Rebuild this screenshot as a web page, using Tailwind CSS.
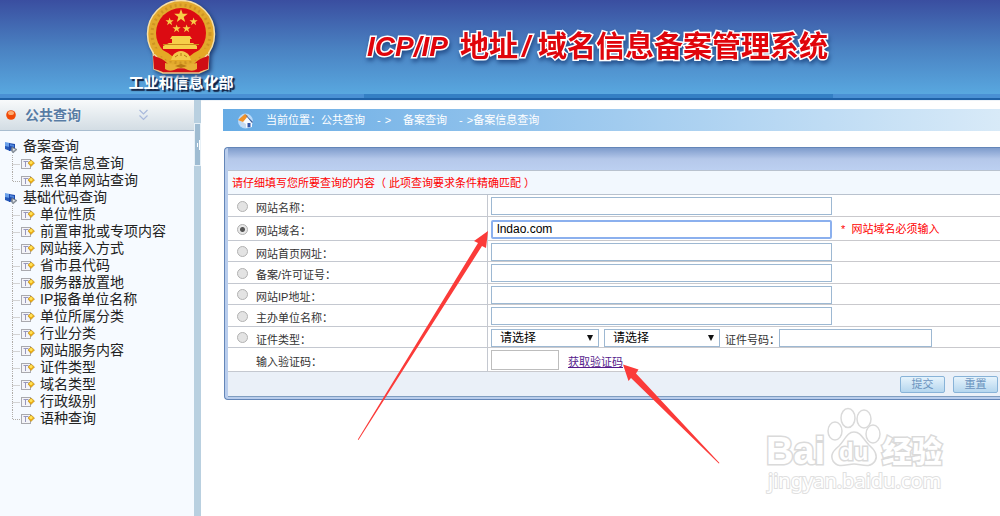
<!DOCTYPE html>
<html lang="zh-CN">
  <head>
    <meta charset="UTF-8" />
    <meta name="viewport" content="width=device-width, initial-scale=1.0" />
    <title>ICP/IP 地址/域名信息备案管理系统</title>
    <script src="https://cdn.jsdelivr.net/npm/@tailwindcss/browser@4"></script>
  </head>
  <body
    class="relative min-h-screen flex flex-col overflow-x-hidden bg-white font-['Liberation_Sans','Noto_Sans_CJK_SC',sans-serif] text-[#333]"
  >
    <!-- Shared icons -->
    <svg class="hidden">
      <symbol id="icon-folder" viewBox="0 0 14 14">
        <path d="M1 2l5 1v7l-5-2z" fill="#6aa0ea" />
        <path d="M1 6l5 1v4l-5-2z" fill="#2458b8" />
        <path d="M5 3l6 1v6l-6 1z" fill="#1c49ae" />
        <path d="M6 4l4 1v2l-4-1z" fill="#4f86dc" />
        <path d="M8 7l5 2.500-4 3.500-2-3z" fill="#8f98a2" stroke="#68727c" stroke-width=".6" />
        <path d="M9 8.500l2 1-1.500 1.500z" fill="#fff" />
      </symbol>
      <symbol id="icon-page" viewBox="0 0 14 12">
        <rect x=".5" y="1.500" width="9" height="9" fill="#f4f4f8" stroke="#a9a9ae" />
        <path d="M2.500 3.500h5M4.500 4v5" stroke="#9898bc" fill="none" />
        <path d="M10 2l3.500 3-3.500 3.500L7 5z" fill="#f2b010" stroke="#b08420" stroke-width=".6" />
        <circle cx="10" cy="4.500" r="1.500" fill="#ffe35a" />
      </symbol>
    </svg>

    <!-- Header -->
    <header
      class="h-[100px] flex border-b-2 border-[#1f62a8] bg-linear-to-b from-[#3a4ea0] via-[#4a82c2] to-[#5aabe2]"
    >
      <div class="w-[364px] shrink-0 border-b-4 border-[#4a90d4]">
        <div class="ml-[125px] w-28 flex flex-col items-center">
          <svg class="w-[72px] h-[74px] drop-shadow-[2px_2px_2px_#1c3a70]" viewBox="0 0 72 74">
            <path d="M8 48l1 21 9 4h36l9-4 1-21z" fill="#d01018" stroke="#ecc98a" stroke-width="1.500" />
            <circle cx="36" cy="34" r="33.500" fill="#e2a92c" stroke="#f6dfa6" stroke-width="1.500" />
            <circle cx="36" cy="34" r="29" fill="none" stroke="#cf9422" stroke-width="3" stroke-dasharray="2 3" />
            <circle cx="36" cy="33" r="25" fill="#dc0b12" />
            <g fill="#f6cf48">
              <path id="star" d="M36 9l1.700 4.800h5.100l-4.100 3.100 1.500 5-4.200-3-4.200 3 1.500-5-4.100-3.100h5.100z" />
              <use href="#star" transform="translate(3 12) scale(.6)" />
              <use href="#star" transform="translate(27 12) scale(.6)" />
              <use href="#star" transform="translate(10 19) scale(.6)" />
              <use href="#star" transform="translate(20 19) scale(.6)" />
              <path d="M27 36h18l2 3H25zM27 39h18v4H27zM24 43h24l4 3v3H18v-3z" />
            </g>
            <path d="M18 44.500h36" stroke="#c98a1c" />
            <path d="M9 48q10 1 18 8h18q8-7 18-8v6q-8 1-14 7H23q-6-6-14-7z" fill="#e5a825" />
            <path d="M28 55q8-8 16 0l2 5H26z" fill="#f3c94a" />
            <path d="M30 57l3-2M36 56v-3M42 57l-3-2" stroke="#b87a14" />
            <path d="M8 56q10 2 15 8l-2 8-12-3zM64 56q-10 2-15 8l2 8 12-3z" fill="#cf0d14" />
            <path d="M20 63q16 4 32 0v6q-4 3-9 1-7-4-14 0-5 2-9-1z" fill="#e8b034" />
            <path d="M30 66l6-2 6 2-6 2z" fill="#b87a14" />
          </svg>
          <div
            class="text-[15px] leading-[18px] font-bold text-white whitespace-nowrap [text-shadow:2px_2px_1px_#101c3c]"
          >
            工业和信息化部
          </div>
        </div>
      </div>
      <div class="w-[469px] shrink-0 border-b-4 border-[#347fc4] flex items-center">
        <h1
          class="h-9 px-[3px] flex items-center text-[29px] leading-9 font-bold text-[#e0050b] whitespace-nowrap [-webkit-text-stroke:3px_#fff] [paint-order:stroke_fill] drop-shadow-[1px_3px_2px_#24508c]"
        >
          <span class="text-[28px] italic">ICP/IP</span>
          <span class="ml-3">地址</span>
          <span class="ml-1 italic">/</span>
          <span class="ml-2">域名信息备案管理系统</span>
        </h1>
      </div>
      <div class="flex-1 border-b-4 border-[#4a90d4]"></div>
    </header>

    <div class="flex-1 flex">
      <!-- Sidebar -->
      <aside class="w-[194px] shrink-0 bg-[#f6faff]">
        <div
          class="h-[31px] flex items-center border-b border-[#a9bdd0] bg-linear-to-b from-[#f8fafb] to-[#d3dde4]"
        >
          <svg class="ml-[5px] w-3 h-3" viewBox="0 0 12 12">
            <circle cx="6" cy="6" r="4.800" fill="#f04a08" />
            <ellipse cx="6" cy="4" rx="3" ry="2" fill="#ffab70" />
          </svg>
          <h2 class="ml-2 w-[114px] text-[14px] font-bold text-[#587ca4] [text-shadow:0_0_2px_#fff]">公共查询</h2>
          <svg class="w-[9px] h-3" viewBox="0 0 9 12" fill="none" stroke="#a9b9dc" stroke-width="1.200">
            <path d="M.5 1l4 4 4-4M.5 6.500l4 4 4-4" />
          </svg>
        </div>
        <ul id="menu" class="pt-[7px] text-[14px] leading-[17px] text-[#222]"></ul>
      </aside>

      <!-- Splitter -->
      <div class="w-[7px] shrink-0 bg-[#b9d0e0] pt-[23px]">
        <button
          type="button"
          aria-label="收起菜单"
          class="w-full h-[43px] flex items-center justify-center border border-[#e8f1f7] bg-[#9fbcd2]"
        >
          <svg class="w-1 h-3 shrink-0" viewBox="0 0 4 12"><path d="M3.500 1v10M1.500 4v4" stroke="#fff" /></svg>
        </button>
      </div>

      <!-- Main -->
      <main class="flex-1 min-w-0 border-t border-[#eef3f8] pt-2 pl-[22px] text-[11px]">
        <nav
          class="h-[22px] flex items-center bg-linear-to-r from-[#66abe4] to-[#d8eaf8] text-white whitespace-nowrap"
        >
          <svg class="ml-[14px] w-[17px] h-[17px]" viewBox="0 0 17 17">
            <circle cx="8.500" cy="9" r="7.500" fill="#b9dafa" />
            <path d="M4 8l6-4 5 6v5l-5 1-6-3z" fill="#f8fbff" />
            <path d="M10.500 11h3v4l-3 .5z" fill="#3457a8" />
            <path d="M4 9l5 3v4l-5-3z" fill="#c5d8ee" />
            <path d="M1 8l7-6 3 2-5 6z" fill="#f0922a" />
            <path d="M8 2l8 8-1 1-5-6z" fill="#3c5f9c" />
          </svg>
          <span class="ml-3">当前位置：公共查询</span>
          <span class="ml-3 flex gap-1"><span>-</span><span>&gt;</span></span>
          <span class="ml-3">备案查询</span>
          <span class="ml-3 flex gap-1"><span>-</span><span>&gt;</span></span>
          <span>备案信息查询</span>
        </nav>

        <form
          class="mt-4 ml-px rounded-l-sm border border-r-0 border-[#6486b8] bg-[#b9cdec] pl-[3px] pb-[2px]"
          onsubmit="return false"
        >
          <div class="h-[22px] bg-linear-to-b from-[#7f9ccc] via-[#b5c8ea] to-[#bcd0f1]"></div>
          <p class="h-[25px] border-t border-b border-[#b9c2ce] bg-[#f2f8fe] pl-1 leading-[25px] text-[#f00]">
            请仔细填写您所要查询的内容（ 此项查询要求条件精确匹配 ）
          </p>
          <table class="w-full table-fixed border-separate border-spacing-0 bg-white">
            <colgroup>
              <col class="w-[260px]" />
              <col />
            </colgroup>
            <tbody id="fields"></tbody>
          </table>
          <div class="h-[25px] flex items-center gap-2 bg-[#eaf0f8] pl-[672px] border-b border-[#7f9dc0]">
            <button
              class="w-[45px] h-[17px] shrink-0 rounded-xs border border-[#88b3d8] bg-linear-to-b from-[#e6f3fc] to-[#b5d6ee] leading-[15px] text-[#6a93be]"
            >
              提交
            </button>
            <button
              type="reset"
              class="w-[45px] h-[17px] shrink-0 rounded-xs border border-[#88b3d8] bg-linear-to-b from-[#e6f3fc] to-[#b5d6ee] leading-[15px] text-[#6a93be]"
            >
              重置
            </button>
          </div>
        </form>
      </main>
    </div>

    <!-- Arrows pointing at the domain box and the captcha link -->
    <svg class="absolute left-0 top-0 w-[1000px] h-[516px] pointer-events-none" viewBox="0 0 1000 516">
      <g fill="#fb3b39">
        <path d="M488 231l-2 17-4-2-123.500 194-.7-.5L478 243l-4-2z" />
        <path d="M623 364.500l15.500 5-2.500 4 83.500 89.500-.7.600L631 378l-2.500 3z" />
      </g>
    </svg>

    <!-- Watermark -->
    <svg
      class="absolute left-[760px] top-[400px] w-[200px] h-[100px] pointer-events-none"
      viewBox="0 0 200 100"
      fill="#fff"
      stroke="#dadada"
      stroke-width="1.500"
      font-family="Liberation Sans, Noto Sans CJK SC, sans-serif"
    >
      <g font-weight="bold" paint-order="stroke" stroke-width="3">
        <text x="6" y="64" font-size="38">Bai</text>
        <text x="122" y="62" font-size="30" font-weight="900">经验</text>
      </g>
      <ellipse cx="75" cy="31" rx="7" ry="9" />
      <ellipse cx="88" cy="18" rx="7" ry="9.500" />
      <ellipse cx="104" cy="19" rx="7" ry="9" />
      <ellipse cx="113" cy="34" rx="7" ry="9" />
      <path d="M94 32c7 0 9 7 15 13 7 6 9 11 6 16-5 8-14 3-21 3s-16 5-21-3c-3-6 0-10 6-15 6-6 8-14 15-14z" />
      <text x="79" y="60" font-size="24" font-weight="bold" stroke-width="3" paint-order="stroke">du</text>
      <text
        x="8"
        y="88"
        font-size="20"
        font-family="Noto Sans, sans-serif"
        stroke="#e0e0e0"
        stroke-width="2"
        paint-order="stroke"
      >jingyan.baidu.com</text>
    </svg>

    <script>
      const menu = document.getElementById("menu");
      const fields = document.getElementById("fields");

      const groups = [
        { title: "备案查询", items: ["备案信息查询", "黑名单网站查询"] },
        {
          title: "基础代码查询",
          items: [
            "单位性质",
            "前置审批或专项内容",
            "网站接入方式",
            "省市县代码",
            "服务器放置地",
            "IP报备单位名称",
            "单位所属分类",
            "行业分类",
            "网站服务内容",
            "证件类型",
            "域名类型",
            "行政级别",
            "语种查询",
          ],
        },
      ];

      // Tree menu
      groups.forEach((group) => {
        const items = group.items
          .map((text, i) => {
            const line = i === group.items.length - 1 ? "M.5 0v9.5h8" : "M.5 0v17M.5 9.500h8";
            return `
            <li class="h-[17px] flex items-center whitespace-nowrap">
              <svg class="ml-3 w-[9px] h-[17px]" viewBox="0 0 9 17"><path d="${line}" fill="none" stroke="#b0aca8" stroke-dasharray="1 1" /></svg>
              <svg class="w-[14px] h-3"><use href="#icon-page" /></svg>
              <a href="#" class="ml-[5px]">${text}</a>
            </li>`;
          })
          .join("");
        menu.innerHTML += `
          <li>
            <div class="h-[17px] flex items-center">
              <svg class="ml-1 w-[14px] h-[14px]"><use href="#icon-folder" /></svg>
              <a href="#" class="ml-[5px]">${group.title}</a>
            </div>
            <ul>${items}</ul>
          </li>`;
      });

      const select = (id, width) => `
        <div class="relative ${width} h-[18px]">
          <select id="${id}" aria-label="证件类型" class="block w-full h-full appearance-none border border-[#9db8d2] bg-white pl-2 text-[12px] leading-4 text-black">
            <option>请选择</option>
          </select>
          <svg class="absolute right-[6px] top-[6px] w-[6px] h-[6px] pointer-events-none" viewBox="0 0 6 6"><path d="M0 0h6L3 6z" fill="#111" /></svg>
        </div>`;

      const rows = [
        { id: "site-name", label: "网站名称：", height: "h-[22px]" },
        { id: "domain", label: "网站域名：", height: "h-6", value: "lndao.com" },
        { id: "home-url", label: "网站首页网址：", height: "h-[21px]" },
        { id: "licence", label: "备案/许可证号：", height: "h-[22px]" },
        { id: "site-ip", label: "网站IP地址：", height: "h-[21px]" },
        { id: "sponsor", label: "主办单位名称：", height: "h-[22px]" },
        { id: "cert-type", label: "证件类型：", height: "h-[21px]" },
        { id: "captcha", label: "输入验证码：", height: "h-6" },
      ];

      // Form rows
      rows.forEach((row) => {
        let control = `<input id="${row.id}" class="w-[341px] h-[18px] border border-[#9db8d2] bg-white" />`;
        if (row.id === "domain") {
          control = `
            <input id="domain" value="${row.value}" class="w-[341px] h-[19px] rounded-xs border-2 border-[#8bb0ee] bg-white px-1 text-[12px] text-black outline-none" />
            <span class="ml-[9px] text-[#f00]">*&nbsp; 网站域名必须输入</span>`;
        } else if (row.id === "cert-type") {
          control = `
            ${select("cert-type", "w-[108px]")}
            <div class="w-[5px]"></div>
            ${select("cert-type-2", "w-[116px]")}
            <label for="cert-no" class="ml-[5px] w-[54px] pt-1 leading-4">证件号码：</label>
            <input id="cert-no" class="w-[153px] h-[18px] border border-[#9db8d2] bg-white" />`;
        } else if (row.id === "captcha") {
          control = `
            <input id="captcha" class="w-[68px] h-5 border border-[#bdbdbd] bg-white" />
            <a href="#" class="ml-[9px] pt-1 leading-4 text-[#551a8b] underline">获取验证码</a>`;
        }
        const radio =
          row.id === "captcha"
            ? `<span class="w-[11px]"></span>`
            : `<input type="radio" name="condition" aria-label="${row.label}" ${row.id === "domain" ? "checked" : ""}
                class="w-[11px] h-[11px] appearance-none rounded-full border border-[#b2b2b2] bg-[#e3e3e3] checked:bg-[radial-gradient(circle,#555_2px,#e8e8e8_3px)]" />`;
        fields.innerHTML += `
          <tr>
            <td class="p-0 border-r border-b border-[#c4c8d0]">
              <div class="${row.height} -mb-px flex items-center pl-[9px]">
                ${radio}
                <label for="${row.id}" class="ml-2 pt-1 leading-4">${row.label}</label>
              </div>
            </td>
            <td class="p-0 border-b border-[#c9c9cd]">
              <div class="${row.height} -mb-px flex items-center pl-[3px] whitespace-nowrap">${control}</div>
            </td>
          </tr>`;
      });
    </script>
  </body>
</html>
